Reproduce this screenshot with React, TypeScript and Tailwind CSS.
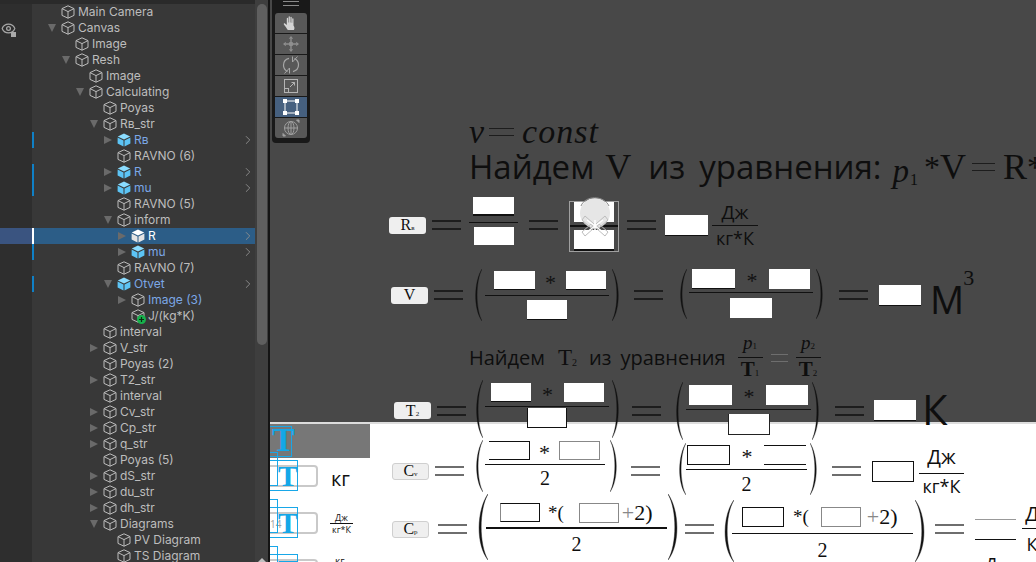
import React from 'react'
import { ChevronRight, Eye } from 'lucide-react'

type Row = {
  name: string
  depth: number
  fold?: 'open' | 'closed'
  prefab?: boolean
  tint?: boolean
  added?: boolean
  selected?: boolean
}

const rows: Row[] = [
  { name: 'Main Camera', depth: 0 },
  { name: 'Canvas', depth: 0, fold: 'open' },
  { name: 'Image', depth: 1 },
  { name: 'Resh', depth: 1, fold: 'open' },
  { name: 'Image', depth: 2 },
  { name: 'Calculating', depth: 2, fold: 'open' },
  { name: 'Poyas', depth: 3 },
  { name: 'Rв_str', depth: 3, fold: 'open' },
  { name: 'Rв', depth: 4, fold: 'closed', prefab: true },
  { name: 'RAVNO (6)', depth: 4 },
  { name: 'R', depth: 4, fold: 'closed', prefab: true },
  { name: 'mu', depth: 4, fold: 'closed', prefab: true },
  { name: 'RAVNO (5)', depth: 4 },
  { name: 'inform', depth: 4, fold: 'open' },
  { name: 'R', depth: 5, fold: 'closed', prefab: true, selected: true },
  { name: 'mu', depth: 5, fold: 'closed', prefab: true },
  { name: 'RAVNO (7)', depth: 4 },
  { name: 'Otvet', depth: 4, fold: 'open', prefab: true },
  { name: 'Image (3)', depth: 5, fold: 'closed', tint: true },
  { name: 'J/(kg*K)', depth: 5, added: true },
  { name: 'interval', depth: 3 },
  { name: 'V_str', depth: 3, fold: 'closed' },
  { name: 'Poyas (2)', depth: 3 },
  { name: 'T2_str', depth: 3, fold: 'closed' },
  { name: 'interval', depth: 3 },
  { name: 'Cv_str', depth: 3, fold: 'closed' },
  { name: 'Cp_str', depth: 3, fold: 'closed' },
  { name: 'q_str', depth: 3, fold: 'closed' },
  { name: 'Poyas (5)', depth: 3 },
  { name: 'dS_str', depth: 3, fold: 'closed' },
  { name: 'du_str', depth: 3, fold: 'closed' },
  { name: 'dh_str', depth: 3, fold: 'closed' },
  { name: 'Diagrams', depth: 3, fold: 'open' },
  { name: 'PV Diagram', depth: 4 },
  { name: 'TS Diagram', depth: 4 },
]

const indent = ['pl-[16px]', 'pl-[30px]', 'pl-[44px]', 'pl-[58px]', 'pl-[72px]', 'pl-[86px]']

function Cube({ filled, white }: { filled?: boolean; white?: boolean }) {
  if (filled) {
    const light = white ? '#ffffff' : '#8adcff'
    const dark = white ? '#e4e4e4' : '#5cc4f5'
    return (
      <svg width="14" height="14" viewBox="0 0 14 14" className="shrink-0">
        <path d="M7 .5 13.2 3.6 7 6.5.8 3.6Z" fill={light} />
        <path d="M.6 4.6 6.5 7.4V13.6L.6 10.6Z" fill={dark} />
        <path d="M13.4 4.6 7.5 7.4V13.6L13.4 10.6Z" fill={dark} />
      </svg>
    )
  }
  return (
    <svg width="14" height="14" viewBox="0 0 14 14" fill="none" stroke="#bcbcbc" strokeWidth="1" className="shrink-0">
      <path d="M7 .8 13 3.6V10.4L7 13.2 1 10.4V3.6ZM1 3.6 7 6.6 13 3.6M7 6.6V13.2" />
    </svg>
  )
}

function HierarchyRow({ row }: { row: Row }) {
  const fg = row.selected ? 'text-white' : row.prefab || row.tint ? 'text-[#7ba7e6]' : 'text-[#bdbdbd]'
  return (
    <div className="flex h-4 shrink-0">
      <div className={`w-8 shrink-0 ${row.selected ? 'bg-[#3a5480]' : 'bg-[#2e2e2e]'} flex items-center`}>
        {row.name === 'Canvas' && (
          <span className="relative ml-[1px] text-[#a9a9a9]">
            <Eye size={15} />
            <span className="absolute right-0 bottom-[-1px] w-[5px] h-[5px] bg-[#a9a9a9]" />
          </span>
        )}
      </div>
      <div className={`relative flex-1 flex items-center ${indent[row.depth]} ${row.selected ? 'bg-[#2c5d87]' : ''}`}>
        {row.prefab && (
          <span className={`absolute left-0 top-0 bottom-0 w-[2px] ${row.selected ? 'bg-white' : 'bg-[#0f80c6]'}`} />
        )}
        <span className="w-[13px] shrink-0 flex items-center">
          {row.fold === 'open' && (
            <span className="w-0 h-0 border-x-[4.5px] border-x-transparent border-t-[8px] border-t-[#6a6a6a]" />
          )}
          {row.fold === 'closed' && (
            <span className="w-0 h-0 border-y-[4.5px] border-y-transparent border-l-[8px] border-l-[#6a6a6a]" />
          )}
        </span>
        <span className="relative shrink-0 flex">
          <Cube filled={row.prefab} white={row.selected} />
          {row.added && (
            <svg width="9" height="9" viewBox="0 0 9 9" className="absolute right-[-1px] bottom-[-1px]">
              <circle cx="4.500" cy="4.500" r="4.500" fill="#17b24c" />
              <path d="M4.500 2V7M2 4.500H7" stroke="#0b2b14" strokeWidth="1.200" />
            </svg>
          )}
        </span>
        <span className={`ml-[3px] text-[12px] leading-4 whitespace-nowrap ${fg}`}>{row.name}</span>
        {row.prefab && (
          <ChevronRight size={14} strokeWidth={1.6} className="absolute right-0 top-[1px] text-[#8d8d8d]" />
        )}
      </div>
    </div>
  )
}

function Tool({ active, first, last, children }: { active?: boolean; first?: boolean; last?: boolean; children: React.ReactNode }) {
  return (
    <div
      className={`h-5 flex items-center justify-center ${active ? 'bg-[#46607f]' : 'bg-[#585858]'} ${first ? 'rounded-t-[3px]' : ''} ${last ? 'rounded-b-[3px]' : ''}`}
    >
      {children}
    </div>
  )
}

function Toolbar() {
  return (
    <div className="absolute left-[2px] top-0 w-[38px] h-[143px] bg-[#191919] rounded-b-[4px] px-[3px]">
      <div className="h-[13px] flex flex-col gap-[3px] items-center pt-[1px]">
        <span className="w-4 h-px bg-[#8a8a8a]" />
        <span className="w-4 h-px bg-[#8a8a8a]" />
      </div>
      <div className="flex flex-col gap-px">
        <Tool first>
          <svg width="16" height="16" viewBox="0 0 16 16" fill="#d4d4d4">
            <path d="M4.800 15C3.600 13 2.500 11.400.9 9.400c-.6-.8.4-1.600 1.100-1L3.800 10V3.400c0-.9 1.300-.9 1.300 0V7.600h.5V1.800c0-.9 1.300-.9 1.300 0V7.600h.5V2.300c0-.9 1.300-.9 1.300 0V7.800h.5V3.800c0-.9 1.300-.9 1.300 0V10.500C12 12.500 11.500 14 10.800 15Z" />
          </svg>
        </Tool>
        <Tool>
          <svg width="16" height="16" viewBox="0 0 16 16" fill="#8f8f8f">
            <path d="M8 0 10.200 2.800H5.800ZM8 16 5.800 13.200H10.200ZM0 8 2.800 5.800V10.200ZM16 8 13.200 10.200V5.800Z" />
            <rect x="6" y="6" width="4" height="4" rx="1" />
            <path d="M8 2.500V6M8 10V13.500M2.500 8H6M10 8H13.500" stroke="#8f8f8f" strokeWidth="1.400" />
          </svg>
        </Tool>
        <Tool>
          <svg width="18" height="18" viewBox="0 0 18 18" fill="none" stroke="#a6a6a6" strokeWidth="1.200">
            <path d="M5.500 15.500C3 14.200 1.500 11.900 1.500 9.200 1.500 5.900 3.800 3.200 7 2.400" />
            <path d="M12.500 2.500C15 3.800 16.500 6.100 16.500 8.800 16.500 12.100 14.200 14.800 11 15.600" />
            <path d="M10.500 .5V6L15.500 .5M7.500 17.500V12L2.500 17.500" strokeWidth="1" />
          </svg>
        </Tool>
        <Tool>
          <svg width="16" height="16" viewBox="0 0 16 16" fill="none" stroke="#b4b4b4" strokeWidth="1">
            <rect x="1.500" y="1.500" width="13" height="13" />
            <rect x="1.500" y="10.500" width="4" height="4" />
            <path d="M7 9 11.500 4.500M8.500 4.500H11.500V7.500" />
          </svg>
        </Tool>
        <Tool active>
          <svg width="16" height="16" viewBox="0 0 16 16" fill="#ffffff">
            <path d="M2 2H14V14H2Z" fill="none" stroke="#ffffff" strokeWidth="1" />
            <rect x="0" y="0" width="4" height="4" />
            <rect x="12" y="0" width="4" height="4" />
            <rect x="0" y="12" width="4" height="4" />
            <rect x="12" y="12" width="4" height="4" />
          </svg>
        </Tool>
        <Tool last>
          <svg width="18" height="18" viewBox="0 0 18 18" fill="none" stroke="#a0a0a0" strokeWidth="1">
            <circle cx="9" cy="9" r="6.500" />
            <path d="M9 2.500V15.500M2.500 9H15.500" />
            <ellipse cx="9" cy="9" rx="3" ry="6.500" />
            <path d="M1 17 3.500 17 1 14.500ZM17 1 14.500 1 17 3.500Z" fill="#a0a0a0" />
          </svg>
        </Tool>
      </div>
    </div>
  )
}

const serif = "font-['Liberation_Serif',serif]"
const sans = "font-['Open_Sans',sans-serif]"

function Blank({ className }: { className: string }) {
  return <div className={`bg-white shrink-0 ${className}`} />
}

function Eq({ className, light, thin }: { className: string; light?: boolean; thin?: boolean }) {
  const bar = `${light ? 'bg-[#6e6e6e]' : 'bg-[#1d1d1d]'} ${thin ? 'h-px' : 'h-[2px]'}`
  return (
    <div className={`shrink-0 flex flex-col gap-[6px] ${className}`}>
      <span className={bar} />
      <span className={bar} />
    </div>
  )
}

function Rule({ className }: { className: string }) {
  return <div className={`bg-[#111111] shrink-0 ${className}`} />
}

function Paren({ className, flip }: { className: string; flip?: boolean }) {
  return (
    <svg
      viewBox="0 0 10 50"
      preserveAspectRatio="none"
      className={`shrink-0 ${flip ? '-scale-x-100' : ''} ${className}`}
    >
      <path d="M10 0C2 12 1 38 10 50 3.500 38 3.500 12 10 0Z" fill="#111111" stroke="#111111" strokeWidth="0.300" />
    </svg>
  )
}

function Label({ sym, sub, outlined }: { sym: string; sub?: string; outlined?: boolean }) {
  return (
    <div
      className={`h-[17px] w-[37px] shrink-0 rounded-[3px] bg-[#efefef] flex items-center justify-center text-[#111111] text-[16px] leading-none ${serif} ${outlined ? 'border border-[#cfcfcf]' : ''}`}
    >
      {sym}
      {sub && <span className="text-[7px] mt-[7px]">{sub}</span>}
    </div>
  )
}

// one equation line, its centre line is what the pieces hang on
function Line({ className, children }: { className: string; children: React.ReactNode }) {
  return <div className={`flex items-center shrink-0 whitespace-nowrap text-[#0e0e0e] ${className}`}>{children}</div>
}

function Frac({ className, children }: { className: string; children: React.ReactNode }) {
  return <div className={`flex flex-col items-center shrink-0 ${className}`}>{children}</div>
}

// zero height so the glyph never pushes the boxes next to it
function Star() {
  return <span className={`flex-1 h-0 text-center text-[22px] leading-none mt-[1px] text-[#111111] ${serif}`}>*</span>
}

function Two() {
  return <span className={`text-[20px] leading-6 text-[#0e0e0e] ${serif}`}>2</span>
}

function PlusTwo({ className }: { className: string }) {
  return (
    <span className={`text-[22px] leading-6 whitespace-nowrap ${serif} ${className}`}>
      <span className="text-[#888888]">+</span>2)
    </span>
  )
}

function Equations() {
  return (
    <div className="absolute left-0 top-[114px] w-[766px] flex flex-col">
      <Line className={`h-9 pl-[199px] italic text-[34px] leading-9 ${serif}`}>
        <span>v</span>
        <Eq thin className="ml-[5px] w-[25px]" />
        <span className="ml-[8px] tracking-[1px]">const</span>
      </Line>

      <Line className={`h-10 pb-[6px] pl-[199px] text-[33px] leading-[34px] ${sans}`}>
        <span>Найдем</span>
        <span className={`ml-[11px] text-[36px] ${serif}`}>V</span>
        <span className="ml-[17px]">из</span>
        <span className="ml-[14px]">уравнения:</span>
        <span className={`ml-[11px] mt-[8px] italic text-[33px] ${serif}`}>p</span>
        <span className={`ml-[1px] mt-[26px] text-[16px] ${serif}`}>1</span>
        <span className={`ml-[6px] text-[32px] ${serif}`}>*</span>
        <span className={`text-[36px] ${serif}`}>V</span>
        <Eq thin className="ml-[6px] w-[23px]" />
        <span className={`ml-[8px] text-[36px] ${serif}`}>R</span>
        <span className={`text-[32px] ${serif}`}>*</span>
      </Line>

      {/* R */}
      <Line className="h-[60px] mt-[5px] pl-[119px]">
        <Label sym="R" sub="в" />
        <Eq className="ml-[6px] w-[29px]" />
        <Frac className="ml-[8px] w-[49px] mb-[8px]">
          <Blank className="w-[41px] h-[19px] border-b-2 border-[#111111]" />
          <Rule className="w-full h-px mt-[6px] mb-[4px]" />
          <Blank className="w-[40px] h-[18px]" />
        </Frac>
        <Eq className="ml-[11px] w-[29px]" />
        <Frac className="relative ml-[12px] w-[48px] mt-[3px]">
          <Blank className="w-[40px] h-[20px]" />
          <Rule className="w-full h-[2px] mt-[3px] mb-[3px]" />
          <Blank className="w-[40px] h-[21px] border-b-2 border-[#111111]" />
          {/* rect tool gizmo lies over the selected fraction */}
          <div className="absolute left-[-1px] top-[-1px] w-[50px] h-[51px] border border-[#a0a0a0]" />
          <svg width="50" height="62" viewBox="0 0 50 62" className="absolute left-0 top-[-8px]" fill="none">
            <circle cx="25" cy="19" r="15" fill="#e6e6e6" />
            <path d="M11 12C15 1 34 1 39 12" stroke="#8a8a8a" strokeWidth="1" />
            <path d="M24 30 15 22 12 26 21 34ZM26 30 35 22 38 26 29 34ZM24 34 15 42 12 38 21 30ZM26 34 35 42 38 38 29 30Z" stroke="#bdbdbd" strokeWidth="1" />
            <path d="M17 26 33 38M33 26 17 38M25 26V38" stroke="#ffffff" strokeWidth="1.500" />
          </svg>
        </Frac>
        <Eq className="ml-[9px] w-[29px]" />
        <Blank className="ml-[9px] w-[43px] h-[21px] border-b border-[#111111]" />
        <Frac className={`ml-[4px] w-[46px] ${sans}`}>
          <span className="text-[19px] leading-6">Дж</span>
          <Rule className="w-full h-px mt-px" />
          <span className="text-[18px] leading-6">кг*К</span>
        </Frac>
      </Line>

      {/* V */}
      <Line className="h-[60px] mt-[10px] pl-[121px]">
        <Label sym="V" />
        <Eq className="ml-[6px] w-[29px]" />
        <Paren className="ml-[9px] w-[10px] h-[52px]" />
        <Frac className="ml-[3px] w-[124px]">
          <div className="flex w-full pl-[9px] pr-[3px]">
            <Blank className="w-[41px] h-[19px] border-b border-[#111111]" />
            <Star />
            <Blank className="w-[40px] h-[19px] border-b border-[#111111]" />
          </div>
          <Rule className="w-full h-px mt-[5px] mb-[4px]" />
          <Blank className="w-[40px] h-[20px] border-b border-[#111111]" />
        </Frac>
        <Paren flip className="ml-[3px] w-[10px] h-[52px]" />
        <Eq className="ml-[12px] w-[29px]" />
        <Paren className="ml-[14px] w-[10px] h-[50px] mb-[3px]" />
        <Frac className="ml-[2px] w-[124px] mb-[4px]">
          <div className="flex w-full pl-[3px] pr-[3px]">
            <Blank className="w-[43px] h-[20px] border-b border-[#111111]" />
            <Star />
            <Blank className="w-[41px] h-[20px]" />
          </div>
          <Rule className="w-full h-px mt-[3px] mb-[5px]" />
          <Blank className="w-[42px] h-[20px]" />
        </Frac>
        <Paren flip className="ml-[3px] w-[10px] h-[50px] mb-[3px]" />
        <Eq className="ml-[13px] w-[29px]" />
        <Blank className="ml-[11px] w-[42px] h-[21px] border-b border-[#111111]" />
        <span className={`ml-[9px] mt-[8px] text-[38px] leading-[46px] ${sans}`}>М</span>
        <span className={`-ml-[1px] mb-[34px] text-[22px] leading-6 ${serif}`}>3</span>
      </Line>

      {/* T2 sentence */}
      <Line className={`h-[54px] mt-[6px] pl-[199px] text-[20px] ${sans}`}>
        <span>Найдем</span>
        <span className={`ml-[13px] text-[23px] ${serif}`}>T</span>
        <span className={`mt-[9px] text-[10px] ${serif}`}>2</span>
        <span className="ml-[12px]">из</span>
        <span className="ml-[9px]">уравнения</span>
        <Frac className={`ml-[12px] w-[25px] ${serif}`}>
          <span className="text-[19px] leading-5 italic">
            p<span className="text-[9px] not-italic">1</span>
          </span>
          <Rule className="w-full h-px mt-px mb-[1px]" />
          <span className="text-[21px] leading-5 font-bold">
            T<span className="text-[9px] font-normal">1</span>
          </span>
        </Frac>
        <Eq thin light className="ml-[8px] w-[17px]" />
        <Frac className={`ml-[8px] w-[25px] ${serif}`}>
          <span className="text-[19px] leading-5 italic">
            p<span className="text-[9px] not-italic">2</span>
          </span>
          <Rule className="w-full h-px mt-px mb-[1px]" />
          <span className="text-[21px] leading-5 font-bold">
            T<span className="text-[9px] font-normal">2</span>
          </span>
        </Frac>
      </Line>

      {/* T2 */}
      <Line className="h-[51px] pl-[124px]">
        <Label sym="T" sub="2" />
        <Eq className="ml-[6px] w-[29px]" />
        <Paren className="ml-[7px] w-[10px] h-[58px] mb-[3px]" />
        <Frac className="ml-[2px] w-[124px] mb-[11px]">
          <div className="flex w-full pl-[6px] pr-[5px]">
            <Blank className="w-[40px] h-[19px] border-b border-[#111111]" />
            <Star />
            <Blank className="w-[40px] h-[19px]" />
          </div>
          <Rule className="w-full h-px mt-[4px] mb-px" />
          <Blank className="w-[40px] h-[20px] border border-[#111111] border-t-0" />
        </Frac>
        <Paren flip className="ml-[3px] w-[10px] h-[58px] mb-[3px]" />
        <Eq className="ml-[10px] w-[29px]" />
        <Paren className="ml-[12px] w-[10px] h-[58px]" />
        <Frac className="ml-[3px] w-[125px] mb-[2px]">
          <div className="flex w-full pl-[3px] pr-[3px]">
            <Blank className="w-[43px] h-[20px]" />
            <Star />
            <Blank className="w-[42px] h-[20px]" />
          </div>
          <Rule className="w-full h-px mt-[4px] mb-[4px]" />
          <Blank className="w-[42px] h-[21px] border border-[#222222] border-t-0" />
        </Frac>
        <Paren flip className="ml-[1px] w-[10px] h-[58px]" />
        <Eq className="ml-[13px] w-[29px]" />
        <Blank className="ml-[10px] w-[42px] h-[21px] border-b border-[#111111]" />
        <span className={`ml-[6px] mb-[3px] text-[42px] leading-[46px] ${sans}`}>К</span>
      </Line>

      {/* Cv */}
      <Line className="h-[70px] pl-[122px]">
        <Label outlined sym="C" sub="v" />
        <Eq light className="ml-[6px] w-[29px]" />
        <Paren className="ml-[9px] w-[10px] h-[52px] mb-[10px]" />
        <Frac className="ml-[2px] w-[120px] mb-[11px]">
          <div className="flex w-full pl-[4px] pr-[5px]">
            <Blank className="w-[41px] h-[19px] border border-l-0 border-[#111111]" />
            <Star />
            <Blank className="w-[41px] h-[19px] border border-[#888888]" />
          </div>
          <Rule className="w-full h-px mt-[4px] mb-px" />
          <Two />
        </Frac>
        <Paren flip className="ml-[5px] w-[10px] h-[52px] mb-[10px]" />
        <Eq light className="ml-[11px] w-[29px]" />
        <Paren className="ml-[16px] w-[10px] h-[52px] mb-[4px]" />
        <Frac className="w-[121px] mb-[1px]">
          <div className="flex w-full pl-px pr-px">
            <Blank className="w-[43px] h-[20px] border border-[#111111]" />
            <Star />
            <Blank className="w-[42px] h-[20px] border-y border-[#111111]" />
          </div>
          <Rule className="w-full h-px mt-[4px] mb-[2px]" />
          <Two />
        </Frac>
        <Paren flip className="ml-[3px] w-[10px] h-[52px] mb-[4px]" />
        <Eq light className="ml-[12px] w-[29px]" />
        <Blank className="ml-[11px] w-[42px] h-[21px] border border-[#111111]" />
        <Frac className={`ml-[5px] w-[45px] ${sans}`}>
          <span className="text-[20px] leading-6 mb-[4px]">Дж</span>
          <Rule className="w-full h-px" />
          <span className="text-[18px] leading-6">кг*К</span>
        </Frac>
      </Line>

      {/* Cp */}
      <Line className="h-[46px] pl-[122px]">
        <Label outlined sym="C" sub="p" />
        <Eq light className="ml-[9px] w-[29px]" />
        <Paren className="ml-[7px] w-[14px] h-[66px] mb-[4px]" />
        <Frac className="-ml-[2px] w-[181px]">
          <div className="flex items-center w-full pl-[14px]">
            <Blank className="w-[40px] h-[19px] border border-l-[#888888] border-[#111111]" />
            <span className={`ml-[8px] text-[19px] leading-[19px] ${serif}`}>*(</span>
            <Blank className="ml-[15px] w-[40px] h-[20px] border border-[#888888]" />
            <PlusTwo className="ml-[3px] leading-[20px]" />
          </div>
          <Rule className="w-full h-[2px] mt-[4px] mb-[3px]" />
          <Two />
        </Frac>
        <Paren flip className="ml-px w-[14px] h-[66px] mb-[4px]" />
        <Eq light className="ml-[3px] w-[29px]" />
        <Paren className="ml-[6px] w-[14px] h-[62px] mt-[4px]" />
        <Frac className="-ml-[2px] w-[181px] mt-[10px]">
          <div className="flex items-center w-full pl-[10px]">
            <Blank className="w-[42px] h-[20px] border border-[#111111]" />
            <span className={`ml-[9px] text-[19px] leading-[19px] ${serif}`}>*(</span>
            <Blank className="ml-[12px] w-[40px] h-[20px] border border-[#888888]" />
            <PlusTwo className="ml-[6px] leading-[20px]" />
          </div>
          <Rule className="w-full h-px mt-[6px] mb-[4px]" />
          <Two />
        </Frac>
        <Paren flip className="ml-[2px] w-[14px] h-[62px] mt-[4px]" />
        <Eq light className="ml-[6px] w-[29px]" />
        <Blank className="ml-[11px] w-[41px] h-[21px] border-y border-[#111111] border-t-[#999999]" />
        <Frac className={`ml-[6px] w-[20px] ${sans}`}>
          <span className="text-[20px] leading-6">Д</span>
          <Rule className="w-full h-px mt-[2px] mb-[3px]" />
          <span className="text-[18px] leading-6">К</span>
        </Frac>
      </Line>

      <Line className={`pl-[715px] text-[18px] leading-6 ${sans}`}>
        <span>Д</span>
      </Line>
    </div>
  )
}

function UnitRow({ children, number }: { children: React.ReactNode; number?: string }) {
  return (
    <div className="relative h-[47px] w-[100px] shrink-0">
      <div className="absolute left-[-10px] top-[5px] w-[58px] h-[22px] rounded-[4px] border-2 border-[#c9c9c9]" />
      {number && <span className={`absolute left-0 top-[11px] text-[10px] leading-3 text-[#a0a0a0] ${sans}`}>{number}</span>}
      <div className="absolute left-[-1px] top-[-8px] w-[9px] h-[34px] border border-[#18a7e8]" />
      <div className="absolute left-[-1px] top-0 w-[29px] h-[31px] border border-[#18a7e8]" />
      <span className={`absolute left-[8px] top-[1px] text-[30px] leading-[30px] font-bold text-[#14a7e8] ${serif}`}>T</span>
      {children}
    </div>
  )
}

function Scene() {
  return (
    <div className="relative flex-1 flex flex-col overflow-hidden bg-white">
      <div className="h-[422px] shrink-0 bg-[#484848]" />
      <div className="h-[2px] shrink-0 bg-[#dddddd]" />
      <div className="relative h-[34px] w-[100px] shrink-0 bg-[#777777]">
        <div className="absolute left-[-1px] top-[2px] w-[23px] h-[31px] border border-[#18a7e8]" />
        <span className={`absolute left-[2px] top-[-1px] text-[34px] leading-[34px] font-bold text-[#14a7e8] ${serif}`}>T</span>
      </div>
      <div className="mt-[2px] flex flex-col">
        <UnitRow>
          <span className={`absolute left-[61px] top-[7px] text-[20px] leading-6 text-[#111111] ${sans}`}>кг</span>
        </UnitRow>
        <UnitRow number="14">
          <div className={`absolute left-[60px] top-[5px] w-[23px] flex flex-col items-center text-[9px] leading-[11px] text-[#111111] ${sans}`}>
            <span>Дж</span>
            <span className="w-full h-px bg-[#111111]" />
            <span>кг*К</span>
          </div>
        </UnitRow>
        <UnitRow>
          <span className={`absolute left-[65px] top-[1px] text-[10px] leading-3 text-[#111111] ${sans}`}>кг</span>
        </UnitRow>
      </div>
      <Equations />
      <Toolbar />
    </div>
  )
}

export default function App() {
  return (
    <div className="flex w-[1036px] h-[562px] overflow-hidden bg-[#383838] font-['Inter',sans-serif]">
      {/* Hierarchy */}
      <div className="w-[255px] shrink-0 flex flex-col overflow-hidden">
        <div className="h-[4px] shrink-0 bg-[#2a2a2a]" />
        {rows.map((row, i) => (
          <HierarchyRow key={i} row={row} />
        ))}
      </div>
      {/* Scrollbar */}
      <div className="w-[13px] shrink-0 bg-[#3e3e3e] pt-[4px] pl-[2px] pr-px relative">
        <div className="h-[341px] rounded-[5px] bg-[#5f5f5f]" />
        <span className="absolute left-[3px] bottom-0 w-0 h-0 border-x-[4px] border-x-transparent border-b-[4px] border-b-[#c0c0c0]" />
      </div>
      <div className="w-[2px] shrink-0 bg-[#141414]" />
      <Scene />
    </div>
  )
}
